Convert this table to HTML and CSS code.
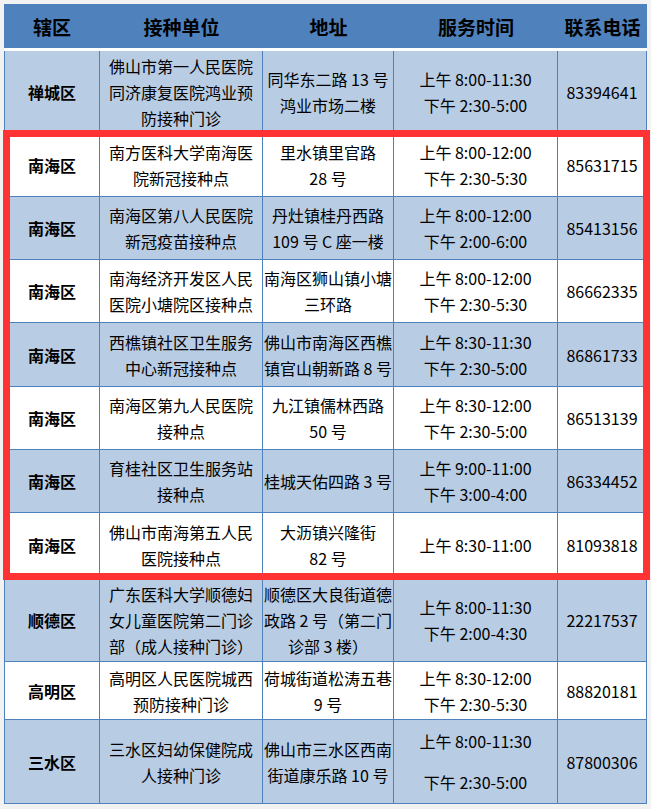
FILE: index.html
```html
<!DOCTYPE html>
<html lang="zh-CN">
<head>
<meta charset="utf-8">
<title>佛山市新冠疫苗接种点</title>
<link rel="stylesheet" href="styles.css">
</head>
<body>
<div class="wrap">
  <div class="table">
    <div class="row head">
      <div class="cell">辖区</div>
      <div class="cell">接种单位</div>
      <div class="cell">地址</div>
      <div class="cell">服务时间</div>
      <div class="cell">联系电话</div>
    </div>
    <div class="row blue h83">
      <div class="cell dist">禅城区</div>
      <div class="cell">佛山市第一人民医院<br>同济康复医院鸿业预<br>防接种门诊</div>
      <div class="cell">同华东二路 13 号<br>鸿业市场二楼</div>
      <div class="cell">上午 8:00-11:30<br>下午 2:30-5:00</div>
      <div class="cell">83394641</div>
    </div>
    <div class="row white h63">
      <div class="cell dist">南海区</div>
      <div class="cell">南方医科大学南海医<br>院新冠接种点</div>
      <div class="cell">里水镇里官路<br>28 号</div>
      <div class="cell">上午 8:00-12:00<br>下午 2:30-5:30</div>
      <div class="cell">85631715</div>
    </div>
    <div class="row blue h63">
      <div class="cell dist">南海区</div>
      <div class="cell">南海区第八人民医院<br>新冠疫苗接种点</div>
      <div class="cell">丹灶镇桂丹西路<br>109 号 C 座一楼</div>
      <div class="cell">上午 8:00-12:00<br>下午 2:00-6:00</div>
      <div class="cell">85413156</div>
    </div>
    <div class="row white h63">
      <div class="cell dist">南海区</div>
      <div class="cell">南海经济开发区人民<br>医院小塘院区接种点</div>
      <div class="cell">南海区狮山镇小塘<br>三环路</div>
      <div class="cell">上午 8:00-12:00<br>下午 2:30-5:30</div>
      <div class="cell">86662335</div>
    </div>
    <div class="row blue h64">
      <div class="cell dist">南海区</div>
      <div class="cell">西樵镇社区卫生服务<br>中心新冠接种点</div>
      <div class="cell">佛山市南海区西樵<br>镇官山朝新路 8 号</div>
      <div class="cell">上午 8:30-11:30<br>下午 2:30-5:00</div>
      <div class="cell">86861733</div>
    </div>
    <div class="row white h63">
      <div class="cell dist">南海区</div>
      <div class="cell">南海区第九人民医院<br>接种点</div>
      <div class="cell">九江镇儒林西路<br>50 号</div>
      <div class="cell">上午 8:30-12:00<br>下午 2:30-5:00</div>
      <div class="cell">86513139</div>
    </div>
    <div class="row blue h63">
      <div class="cell dist">南海区</div>
      <div class="cell">育桂社区卫生服务站<br>接种点</div>
      <div class="cell">桂城天佑四路 3 号</div>
      <div class="cell">上午 9:00-11:00<br>下午 3:00-4:00</div>
      <div class="cell">86334452</div>
    </div>
    <div class="row white h65">
      <div class="cell dist">南海区</div>
      <div class="cell">佛山市南海第五人民<br>医院接种点</div>
      <div class="cell">大沥镇兴隆街<br>82 号</div>
      <div class="cell">上午 8:30-11:00</div>
      <div class="cell">81093818</div>
    </div>
    <div class="row blue h84">
      <div class="cell dist">顺德区</div>
      <div class="cell">广东医科大学顺德妇<br>女儿童医院第二门诊<br>部（成人接种门诊）</div>
      <div class="cell">顺德区大良街道德<br>政路 2 号（第二门<br>诊部 3 楼）</div>
      <div class="cell">上午 8:00-11:30<br>下午 2:00-4:30</div>
      <div class="cell">22217537</div>
    </div>
    <div class="row white h58">
      <div class="cell dist">高明区</div>
      <div class="cell">高明区人民医院城西<br>预防接种门诊</div>
      <div class="cell">荷城街道松涛五巷<br>9 号</div>
      <div class="cell">上午 8:30-12:00<br>下午 2:30-5:30</div>
      <div class="cell">88820181</div>
    </div>
    <div class="row blue h84">
      <div class="cell dist">三水区</div>
      <div class="cell">三水区妇幼保健院成<br>人接种门诊</div>
      <div class="cell">佛山市三水区西南<br>街道康乐路 10 号</div>
      <div class="cell split"><span>上午 8:00-11:30</span><span>下午 2:30-5:00</span></div>
      <div class="cell">87800306</div>
    </div>
  </div>
  <div class="highlight"></div>
</div>
</body>
</html>
```

FILE: styles.css
```css
html, body {
  margin: 0;
  padding: 0;
}

body {
  background: #f2f2f2;
  padding: 4px;
  font-family: "Noto Sans CJK SC", "Noto Sans", sans-serif;
  color: #000;
}

.wrap {
  position: relative;
  width: 643px;
}

.table {
  display: flex;
  flex-direction: column;
}

.row {
  display: grid;
  grid-template-columns: 96px 163px 131px 164px 89px;
  box-sizing: border-box;
}

.cell {
  display: flex;
  flex-direction: column;
  align-items: center;
  justify-content: center;
  text-align: center;
  box-sizing: border-box;
  font-size: 16px;
  line-height: 26px;
  border-right: 1px solid #4f81bd;
  border-bottom: 1px solid #4f81bd;
  padding: 0 2px;
  white-space: nowrap;
}

.row .cell:first-child {
  border-left: 1px solid #4f81bd;
}

.head {
  height: 47px;
  background: #4f81bd;
  border-bottom: 3px solid #ffffff;
}

.head .cell {
  border: none;
  font-size: 19px;
  font-weight: bold;
  color: #000;
  padding-top: 2px;
}

.head .cell:first-child {
  border-left: none;
}

.blue {
  background: #b8cce4;
}

.white {
  background: #ffffff;
}

.dist {
  font-weight: bold;
}

.h58 { height: 58px; }
.h63 { height: 63px; }
.h64 { height: 64px; }
.h65 { height: 65px; }
.h83 { height: 83px; }
.h84 { height: 84px; }

.split {
  gap: 15px;
}

.highlight {
  position: absolute;
  left: -1px;
  top: 126px;
  width: 647px;
  height: 450px;
  box-sizing: border-box;
  border: 7px solid #ff3333;
  pointer-events: none;
}
```
